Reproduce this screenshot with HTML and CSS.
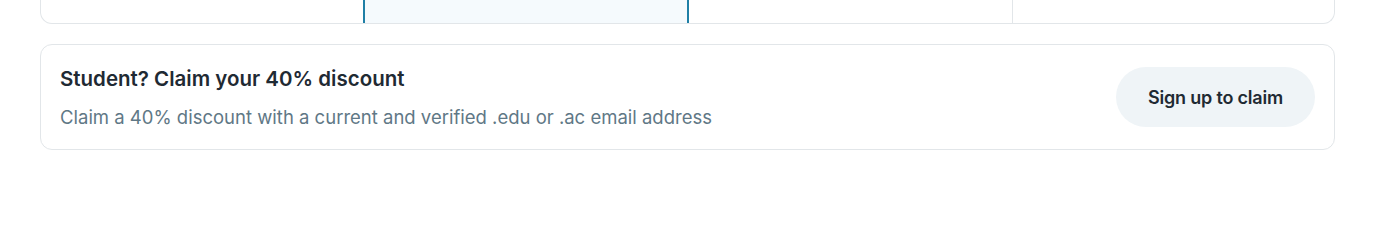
FILE: index.html
```html
<!DOCTYPE html>
<html lang="en">
<head>
<meta charset="utf-8">
<title>Student discount</title>
<link rel="stylesheet" href="styles.css">
</head>
<body>
<div class="page">
  <div class="plans-tail">
    <div class="plan-col"></div>
    <div class="plan-col plan-col--featured"></div>
    <div class="plan-col"></div>
    <div class="plan-col"></div>
  </div>
  <div class="student-card">
    <div class="student-text">
      <h3 class="student-title">Student? Claim your 40% discount</h3>
      <p class="student-desc">Claim a 40% discount with a current and verified .edu or .ac email address</p>
    </div>
    <button class="claim-btn" type="button">Sign up to claim</button>
  </div>
</div>
</body>
</html>
```

FILE: styles.css
```css
* { box-sizing: border-box; }
html, body { margin: 0; padding: 0; background: #fff; }
body { font-family: Inter, "Noto Sans", sans-serif; color: #1f2a33; }
.page { padding: 0 51px 0 40px; display: flex; flex-direction: column; gap: 20px; }
.plans-tail {
  display: grid;
  grid-template-columns: 322px 326px 323px 1fr;
  height: 24px;
  border: 1px solid #e2e6e9;
  border-top: none;
  border-radius: 0 0 12px 12px;
  overflow: hidden;
}
.plan-col { border-left: 1px solid #e2e6e9; }
.plan-col:first-child { border-left: none; }
.plan-col--featured {
  background: #f5fafd;
  border-left: 2px solid #1f7fa6;
  border-right: 2px solid #1f7fa6;
}
.plan-col--featured + .plan-col { border-left: none; }
.student-card {
  display: flex;
  align-items: center;
  justify-content: space-between;
  border: 1px solid #e2e6e9;
  border-radius: 12px;
  padding: 21px 19px 21px 19px;
  min-height: 106px;
}
.student-text { display: flex; flex-direction: column; gap: 14px; }
.student-title {
  margin: 0;
  font-size: 20.5px;
  font-weight: 600;
  line-height: 26px;
  color: #1f2a33;
}
.student-desc {
  margin: 0;
  font-size: 18.5px;
  font-weight: 400;
  line-height: 22px;
  color: #5f7886;
}
.claim-btn {
  border: none;
  background: #eff4f7;
  color: #1f2a33;
  font-family: inherit;
  font-size: 18px;
  font-weight: 600;
  letter-spacing: -0.2px;
  height: 60px;
  width: 199px;
  border-radius: 30px;
  padding: 0;
  cursor: pointer;
}
```
